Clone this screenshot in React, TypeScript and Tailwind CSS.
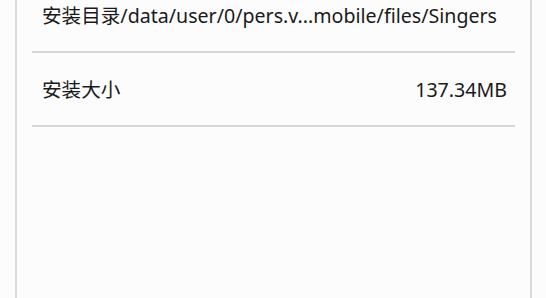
const rows = [
  { label: "安装目录/data/user/0/pers.v...mobile/files/Singers", value: "" },
  { label: "安装大小", value: "137.34MB" },
];

export default function App() {
  return (
    <div className="h-[298px] w-[546px] overflow-hidden bg-[#fcfcfc] font-['Noto_Sans','Noto_Sans_CJK_SC',sans-serif] text-[#1a1a1a]">
      <div className="ml-[15px] flex h-full w-[517px] flex-col border-x-2 border-[#dadada] px-[15px]">
        <div className="-mt-[21px]">
          {rows.map((row) => (
            <div
              key={row.label}
              className="flex h-[74px] items-center justify-between border-b-2 border-[#d6d6d6] pl-[10px] pr-[8px] pt-[2px] text-[19.6px] leading-none"
            >
              <span className="whitespace-nowrap">{row.label}</span>
              {row.value && <span>{row.value}</span>}
            </div>
          ))}
        </div>
      </div>
    </div>
  );
}
